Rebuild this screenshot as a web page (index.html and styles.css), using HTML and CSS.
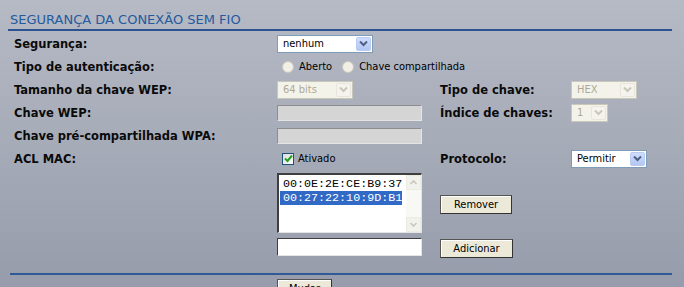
FILE: index.html
```html
<!DOCTYPE html>
<html>
  <head>
    <title>Segurança da conexão sem fio</title>
    <link rel="stylesheet" href="styles.css">
  </head>
  <body>
    <div class="panel">
      <h1 class="title">SEGURANÇA DA CONEXÃO SEM FIO</h1>

      <div class="form">
        <div class="lbl">Segurança:</div>
        <div class="sel sel-sec"><span>nenhum</span><span class="arrow"><svg width="11" height="11" viewBox="0 0 11 11"><path d="M2 3.5 L5.5 7 L9 3.5" /></svg></span></div>
        <div></div>
        <div></div>

        <div class="lbl">Tipo de autenticação:</div>
        <div class="radios">
          <span class="radio"></span><span class="opt">Aberto</span>
          <span class="radio"></span><span class="opt">Chave compartilhada</span>
        </div>

        <div class="lbl">Tamanho da chave WEP:</div>
        <div class="sel sel-bits off"><span>64 bits</span><span class="arrow"><svg width="11" height="11" viewBox="0 0 11 11"><path d="M2 3.5 L5.5 7 L9 3.5" /></svg></span></div>
        <div class="lbl">Tipo de chave:</div>
        <div class="sel sel-hex off"><span>HEX</span><span class="arrow"><svg width="11" height="11" viewBox="0 0 11 11"><path d="M2 3.5 L5.5 7 L9 3.5" /></svg></span></div>

        <div class="lbl">Chave WEP:</div>
        <div class="field off"></div>
        <div class="lbl">Índice de chaves:</div>
        <div class="sel sel-idx off"><span>1</span><span class="arrow"><svg width="11" height="11" viewBox="0 0 11 11"><path d="M2 3.5 L5.5 7 L9 3.5" /></svg></span></div>

        <div class="lbl">Chave pré-compartilhada WPA:</div>
        <div class="field off"></div>
        <div></div>
        <div></div>

        <div class="lbl">ACL MAC:</div>
        <div class="check-row">
          <span class="check"><svg width="9" height="9" viewBox="0 0 9 9"><path d="M1 4.5 L3.5 7 L8 1.5" /></svg></span><span class="opt">Ativado</span>
        </div>
        <div class="lbl">Protocolo:</div>
        <div class="sel sel-proto"><span>Permitir</span><span class="arrow"><svg width="11" height="11" viewBox="0 0 11 11"><path d="M2 3.5 L5.5 7 L9 3.5" /></svg></span></div>

        <div></div>
        <div class="listbox">
          <div class="items">
            <div class="item">00:0E:2E:CE:B9:37</div>
            <div class="item selected">00:27:22:10:9D:B1</div>
          </div>
          <div class="scroll">
            <span class="sbtn"><svg width="9" height="9" viewBox="0 0 9 9"><path d="M1.5 6 L4.5 3 L7.5 6" /></svg></span>
            <span class="sbtn"><svg width="9" height="9" viewBox="0 0 9 9"><path d="M1.5 3 L4.5 6 L7.5 3" /></svg></span>
          </div>
        </div>
        <div><button class="btn btn-rm">Remover</button></div>
        <div></div>

        <div></div>
        <div class="field"></div>
        <div><button class="btn btn-add">Adicionar</button></div>
        <div></div>
      </div>

      <div class="footer">
        <button class="btn btn-save">Mudar</button>
      </div>
    </div>
  </body>
</html>
```

FILE: styles.css
```css
html, body {
  margin: 0;
  height: 100%;
}

body {
  background: linear-gradient(#b6bac5, #969cab);
  font-family: "DejaVu Sans", Verdana, sans-serif;
  color: #000;
  overflow: hidden;
}

.panel {
  margin: 0 12px 0 8px;
}

.title {
  margin: 0;
  padding: 12px 0 1px 2px;
  font-size: 13px;
  font-weight: normal;
  line-height: 16px;
  color: #245a9e;
  border-bottom: 2px solid #2c5290;
}

.form {
  display: grid;
  grid-template-columns: 263px 163px 131px 1fr;
  grid-template-rows: repeat(6, 23px) 66px 22px;
  align-items: center;
  margin: 1px 0 0 6px;
}

.lbl {
  font-size: 11.5px;
  font-weight: bold;
  white-space: nowrap;
  color: #0a0a0a;
}

/* controls */
.sel, .opt, .item, .btn {
  font-family: "DejaVu Sans Condensed", "DejaVu Sans", sans-serif;
  font-stretch: condensed;
  font-size: 11px;
}

.sel {
  display: flex;
  align-items: center;
  justify-content: space-between;
  box-sizing: border-box;
  height: 18px;
  padding: 0 1px 0 5px;
  background: #fff;
  border: 1px solid #7f9db9;
}

.sel-sec { width: 96px; }
.sel-bits { width: 76px; }
.sel-hex { width: 66px; }
.sel-idx { width: 37px; }
.sel-proto { width: 76px; }

.arrow {
  display: flex;
  align-items: center;
  justify-content: center;
  width: 15px;
  height: 14px;
  box-sizing: border-box;
  background: linear-gradient(#d0ddfc, #b2c7f3);
  border: 1px solid #b9cbf3;
  border-radius: 2px;
}

.arrow path {
  fill: none;
  stroke: #4d6185;
  stroke-width: 2;
}

.sel.off {
  background: #f4f3ea;
  border-color: #c9c7ba;
  color: #aca899;
}

.sel.off .arrow {
  background: #f4f3ee;
  border-color: #e8e6dc;
}

.sel.off .arrow path {
  stroke: #c9c7ba;
}

.radios {
  grid-column: 2 / 5;
  display: flex;
  align-items: center;
  padding-left: 5px;
}

.radio {
  width: 12px;
  height: 12px;
  box-sizing: border-box;
  border: 1px solid #cac8bb;
  border-radius: 50%;
  background: #f1efe6;
  margin-right: 5px;
}

.radios .opt + .radio {
  margin-left: 10px;
}

.field {
  box-sizing: border-box;
  width: 145px;
  height: 18px;
  background: #fff;
  border-top: 1px solid #3f3f3f;
  border-left: 1px solid #3f3f3f;
  border-right: 1px solid #e4e4e4;
  border-bottom: 1px solid #e4e4e4;
}

.field.off {
  height: 16px;
  background: #d5d5d5;
  border-top-color: #8d8d8d;
  border-left-color: #8d8d8d;
}

.check-row {
  display: flex;
  align-items: center;
  padding-left: 5px;
}

.check {
  display: flex;
  align-items: center;
  justify-content: center;
  width: 12px;
  height: 12px;
  box-sizing: border-box;
  border: 1px solid #1c5180;
  background: linear-gradient(135deg, #dcdcd7, #fff);
  margin-right: 4px;
}

.check path {
  fill: none;
  stroke: #21a121;
  stroke-width: 2;
}

.listbox {
  display: flex;
  box-sizing: border-box;
  width: 145px;
  height: 60px;
  background: #fff;
  border-top: 2px solid #3f3f3f;
  border-left: 2px solid #3f3f3f;
  border-right: 1px solid #e4e4e4;
  border-bottom: 1px solid #e4e4e4;
}

.items {
  flex: 1;
  padding: 2px 0 0 1px;
}

.item {
  font-family: "Liberation Mono", "Courier New", monospace;
  font-size: 11.7px;
  line-height: 14px;
  padding-left: 3px;
  width: 119px;
}

.item.selected {
  background: #3169c6;
  color: #fff;
}

.scroll {
  display: flex;
  flex-direction: column;
  justify-content: space-between;
  width: 15px;
  background: #f8f8f4;
}

.sbtn {
  display: flex;
  align-items: center;
  justify-content: center;
  height: 15px;
  background: #f2f2ec;
  border: 1px solid #ebebe4;
  box-sizing: border-box;
}

.sbtn path {
  fill: none;
  stroke: #c8c8c0;
  stroke-width: 1.6;
}

.btn {
  height: 19px;
  padding: 0;
  color: #000;
  background: #ece9d8;
  border: 1px solid #555;
  border-right-color: #333;
  border-bottom-color: #333;
  box-shadow: inset 1px 1px 0 #fff;
}

.btn-rm { width: 72px; }
.btn-add { width: 73px; }
.btn-save {
  width: 55px;
  vertical-align: top;
}

.footer {
  margin: 15px 0 0 2px;
  padding: 4px 0 0 267px;
  border-top: 2px solid #2f5a95;
}
```
